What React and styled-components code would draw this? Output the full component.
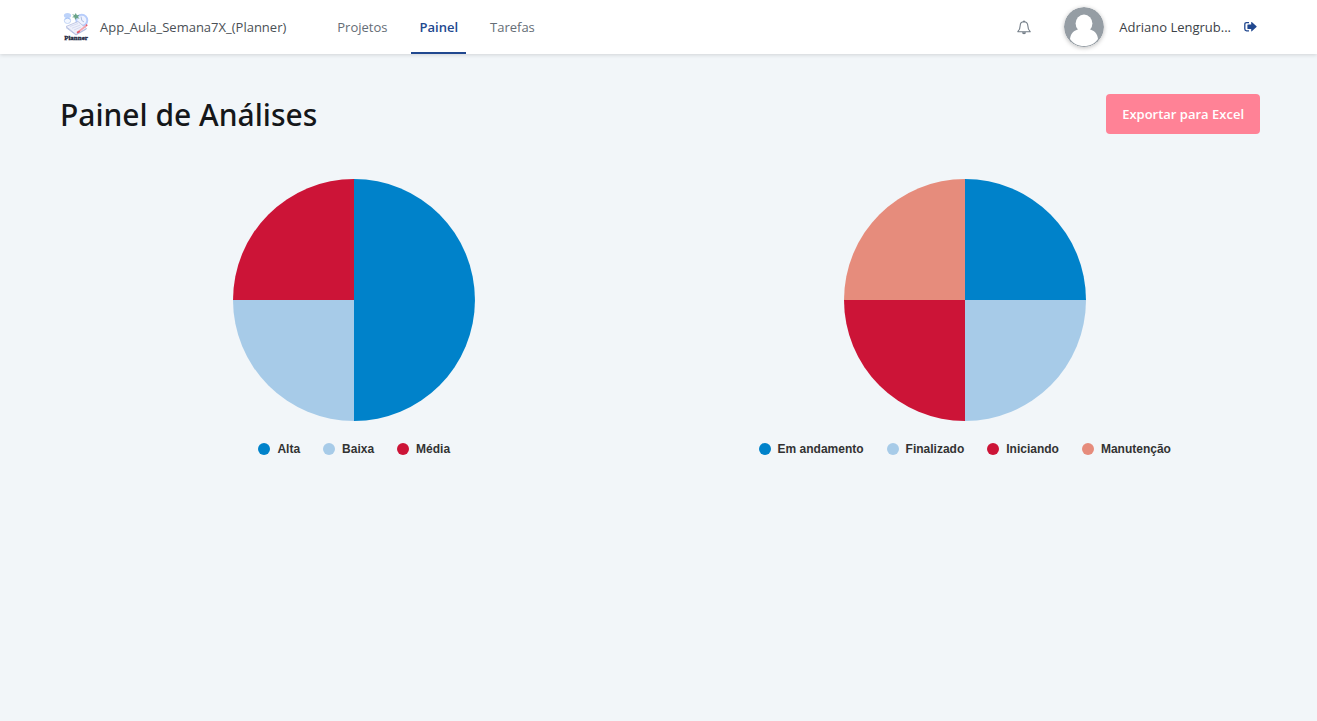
import React from "react";
import styled, { createGlobalStyle } from "styled-components";

const GlobalStyle = createGlobalStyle`
  * { box-sizing: border-box; }
  body {
    margin: 0;
    background: #f2f6f9;
    color: #15171a;
    font-family: "Segoe UI", "Open Sans", "Noto Sans", sans-serif;
    font-size: 13px;
    line-height: 20px;
  }
`;

const Header = styled.header`
  display: flex;
  align-items: center;
  height: 54px;
  padding: 0 60px;
  background: #fff;
  box-shadow: 0 1px 4px rgba(0, 0, 0, 0.14);
`;

const Brand = styled.a`
  display: flex;
  align-items: center;
  gap: 8px;
  color: #4a5056;
  text-decoration: none;
`;

const Nav = styled.nav`
  display: flex;
  align-self: stretch;
  gap: 16px;
  margin-left: 43px;
`;

const NavLink = styled.a`
  display: flex;
  align-items: center;
  padding: 2px 8px 0;
  border-bottom: 2px solid ${(p) => (p.$active ? "#21488f" : "transparent")};
  color: ${(p) => (p.$active ? "#21488f" : "#656d76")};
  font-weight: ${(p) => (p.$active ? 600 : 400)};
  text-decoration: none;
`;

const UserArea = styled.div`
  display: flex;
  align-items: center;
  margin-left: auto;
`;

const IconButton = styled.button`
  display: flex;
  padding: 0;
  border: 0;
  background: none;
  color: ${(p) => p.$color};
  cursor: pointer;
`;

const Avatar = styled.svg`
  margin: 0 15px 0 33px;
  border-radius: 50%;
  box-shadow: 0 1px 4px rgba(0, 0, 0, 0.25);
`;

const UserName = styled.span`
  margin-right: 13px;
  color: #3c4248;
`;

const Main = styled.main`
  padding: 40px 57px 40px 60px;
`;

const TitleRow = styled.div`
  display: flex;
  align-items: flex-start;
  justify-content: space-between;
`;

const Title = styled.h1`
  margin: 0;
  font-family: "Segoe UI", "Noto Sans", "Open Sans", sans-serif;
  font-size: 30px;
  font-weight: 500;
  line-height: 42px;
`;

const ExportButton = styled.button`
  height: 40px;
  padding: 0 16px;
  border: 0;
  border-radius: 4px;
  background: #ff8296;
  color: #fff;
  font: inherit;
  font-weight: 600;
  cursor: pointer;
`;

const Charts = styled.div`
  display: grid;
  grid-template-columns: 1fr 1fr;
  gap: 22px;
  margin: 43px 1px 0 0;
`;

const Figure = styled.figure`
  display: flex;
  flex-direction: column;
  align-items: center;
  gap: 18px;
  margin: 0;
`;

const Legend = styled.ul`
  display: flex;
  gap: 23px;
  margin: 0;
  padding: 0;
  list-style: none;
  color: #333;
  font: 700 12px/20px "Liberation Sans", Arial, sans-serif;
`;

const LegendItem = styled.li`
  display: flex;
  align-items: center;
  gap: 7px;

  &::before {
    content: "";
    width: 12px;
    height: 12px;
    border-radius: 50%;
    background: ${(p) => p.$color};
  }
`;

const COLORS = ["#0082ca", "#a7cbe8", "#cc1437", "#e68c7c"];

const priorities = [
  { label: "Alta", value: 2 },
  { label: "Baixa", value: 1 },
  { label: "Média", value: 1 },
];

const statuses = [
  { label: "Em andamento", value: 1 },
  { label: "Finalizado", value: 1 },
  { label: "Iniciando", value: 1 },
  { label: "Manutenção", value: 1 },
];

function PieChart({ data, label }) {
  const radius = 121;
  const total = data.reduce((sum, d) => sum + d.value, 0);
  const point = (fraction) => {
    const angle = fraction * Math.PI * 2;
    return `${radius + radius * Math.sin(angle)} ${radius - radius * Math.cos(angle)}`;
  };
  let start = 0;
  return (
    <Figure>
      <svg width="242" height="242" viewBox="0 0 242 242" role="img" aria-label={label}>
        {data.map((d, i) => {
          const end = start + d.value / total;
          const path = `M${radius} ${radius}L${point(start)}A${radius} ${radius} 0 0 1 ${point(end)}Z`;
          start = end;
          return <path key={d.label} d={path} fill={COLORS[i]} />;
        })}
      </svg>
      <Legend>
        {data.map((d, i) => (
          <LegendItem key={d.label} $color={COLORS[i]}>{d.label}</LegendItem>
        ))}
      </Legend>
    </Figure>
  );
}

function Logo() {
  return (
    <svg width="32" height="32" viewBox="0 0 32 32" fill="none" aria-hidden="true">
      <ellipse cx="7.5" cy="4.5" rx="3.6" ry="2.6" fill="#bdd3fa" />
      <ellipse cx="7.5" cy="9.8" rx="3.2" ry="2.7" fill="#f3f7ff" stroke="#b9cef3" strokeWidth=".8" />
      <path d="M4.5 8.2q3-2.2 6 0" stroke="#a9c5f7" />
      <circle cx="21.8" cy="9.3" r="5.5" fill="#eef2ff" stroke="#b7cdfb" strokeWidth="2" />
      <path d="M21 5.5l.8 4 2.2 1.5" stroke="#9baed5" strokeWidth=".8" />
      <path d="M6 15.5l12-5 8.5 7-10.5 6z" fill="#eef0fb" stroke="#b4bddd" strokeWidth=".8" />
      <path d="M6 16.5l10 7.5 10.5-6" stroke="#a8b5de" strokeWidth=".8" />
      <path d="M10 15.5l8-3M12 17.2l8-3M14 19l7-3" stroke="#ccd3ed" strokeWidth=".7" />
      <path d="M17.5 21.5l9-7" stroke="#f5a4ad" strokeWidth="1.6" />
      <path d="M17 21.8l2.8-1.6M26 14.6l1.3-.8" stroke="#e15b6c" strokeWidth="1.6" />
      <path d="M12 3l2.6 1L15.8 2l1.1 2.3 2.6-.6-1.7 2 1.8 2-2.8-.6-1.7 2-.5-2.6-2.6-.2 2-1.3z" fill="#6aa487" />
      <text x="16" y="29.2" textAnchor="middle" fill="#18233b" stroke="#18233b" strokeWidth=".3" fontFamily="Liberation Serif, serif" fontWeight="700" fontSize="7">Planner</text>
    </svg>
  );
}

function BellIcon() {
  return (
    <svg width="14" height="15" viewBox="0 0 14 15" fill="none" stroke="currentColor" strokeLinejoin="round" aria-hidden="true">
      <path d="M7 .4v1.4M7 1.7C4.6 1.7 3.2 3.4 3.2 5.6c0 3.5-.8 4.6-2.4 6.1h12.4c-1.6-1.5-2.4-2.6-2.4-6.1 0-2.2-1.4-3.9-3.8-3.9z" strokeWidth="1.1" />
      <path d="M5 12.2h4a2 2 0 0 1-4 0z" fill="currentColor" stroke="none" />
    </svg>
  );
}

function SignOutIcon() {
  return (
    <svg width="13" height="12" viewBox="0 0 13 12" fill="none" aria-hidden="true">
      <path d="M5 1.6H2.6Q.8 1.6.8 3.4v4.7q0 1.8 1.8 1.8H5" stroke="currentColor" strokeWidth="1.3" />
      <path d="M7.2 1.3q0-.7.6-.2l4.7 4.2q.4.4 0 .8l-4.7 4.2q-.6.5-.6-.2V8H4q-.6 0-.6-.6V4.2q0-.6.6-.6h3.2z" fill="currentColor" />
    </svg>
  );
}

export default function App() {
  return (
    <>
      <GlobalStyle />
      <Header>
        <Brand href="#">
          <Logo />
          App_Aula_Semana7X_(Planner)
        </Brand>
        <Nav>
          <NavLink href="#projetos">Projetos</NavLink>
          <NavLink href="#painel" $active aria-current="page">Painel</NavLink>
          <NavLink href="#tarefas">Tarefas</NavLink>
        </Nav>
        <UserArea>
          <IconButton $color="#737d87" aria-label="Notificações"><BellIcon /></IconButton>
          <Avatar width="40" height="40" viewBox="0 0 40 40" aria-hidden="true">
            <circle cx="20" cy="20" r="20" fill="#959da4" />
            <ellipse cx="20" cy="16.5" rx="8.4" ry="9" fill="#fff" />
            <path d="M6 32C6.6 26 10.5 22.8 15.5 22.2h9c5 .6 8.9 3.8 9.5 9.8C31 36.500 26 39 20 39S9 36.500 6 32z" fill="#fff" />
          </Avatar>
          <UserName>Adriano Lengrub...</UserName>
          <IconButton $color="#21488f" aria-label="Sair"><SignOutIcon /></IconButton>
        </UserArea>
      </Header>
      <Main>
        <TitleRow>
          <Title>Painel de Análises</Title>
          <ExportButton>Exportar para Excel</ExportButton>
        </TitleRow>
        <Charts>
          <PieChart data={priorities} label="Tarefas por prioridade" />
          <PieChart data={statuses} label="Tarefas por status" />
        </Charts>
      </Main>
    </>
  );
}
